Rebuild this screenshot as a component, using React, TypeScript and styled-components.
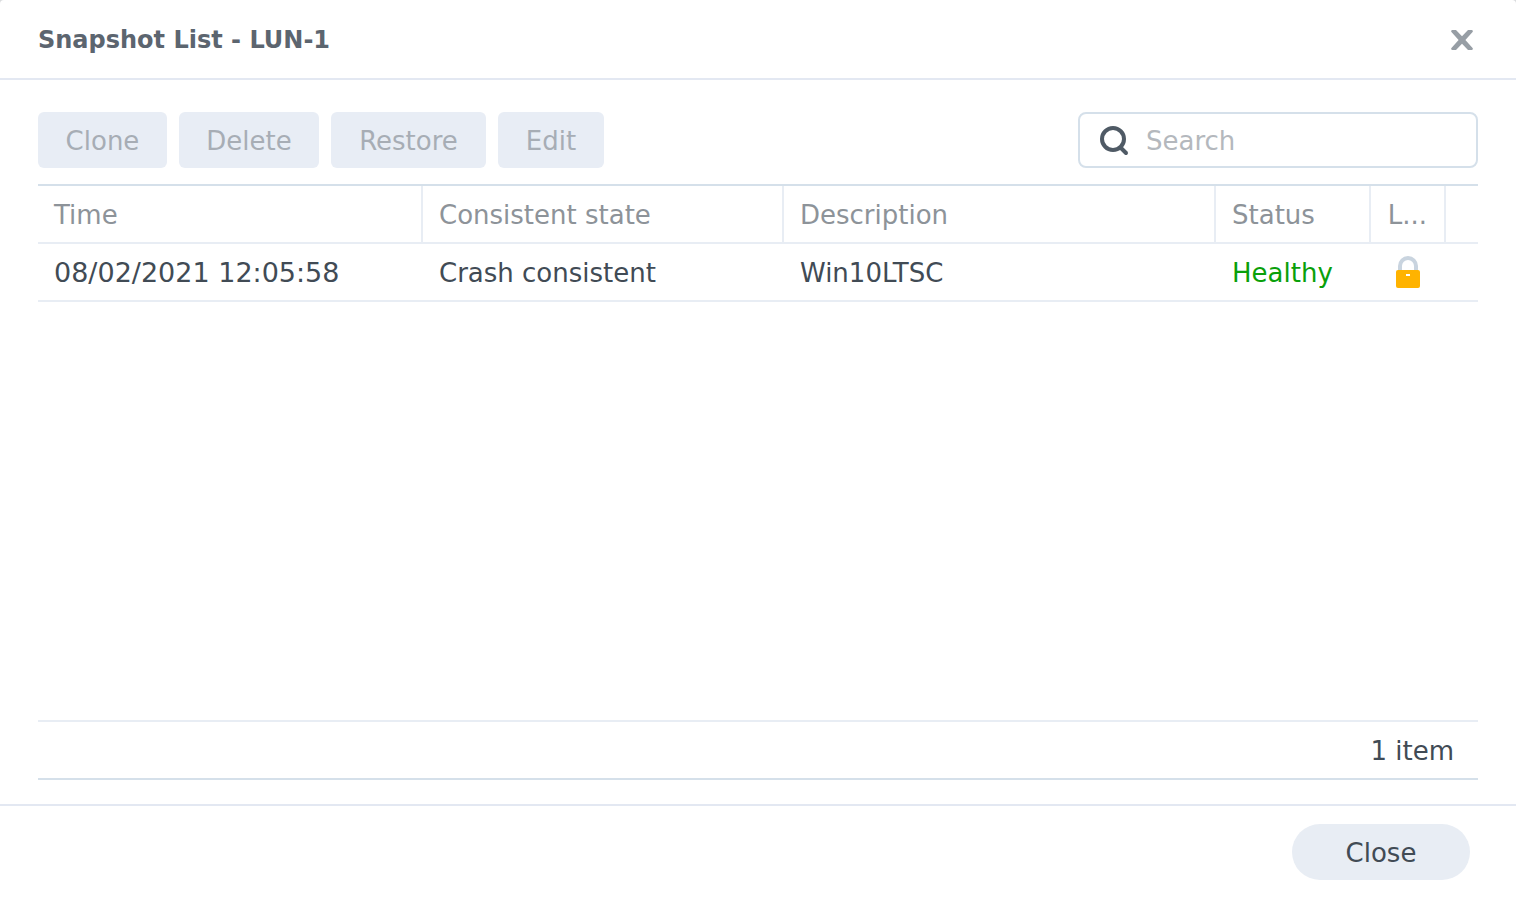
import React from "react";
import styled, { createGlobalStyle } from "styled-components";

const GlobalStyle = createGlobalStyle`
  * { box-sizing: border-box; }
  body {
    margin: 0;
    background: #d9dbdd;
    color: #414b55;
    font-family: Verdana, "DejaVu Sans", sans-serif;
    font-size: 26px;
    line-height: 32px;
  }
  button, input { font: inherit; color: inherit; }
`;

const Dialog = styled.main`
  display: flex;
  flex-direction: column;
  min-height: 100vh;
  background: #fff;
  border-radius: 4px 4px 0 0;
`;

const Header = styled.header`
  display: flex;
  align-items: center;
  justify-content: space-between;
  height: 80px;
  padding: 2px 38px 0;
  border-bottom: 2px solid #e3e8f2;
`;

const Title = styled.h1`
  margin: 0;
  font-size: 24px;
  font-weight: 700;
  color: #5c656f;
`;

const IconButton = styled.button`
  display: flex;
  align-items: center;
  justify-content: center;
  width: 32px;
  height: 32px;
  padding: 0;
  border: 0;
  background: none;
  color: #979ea5;
`;

const Content = styled.section`
  flex: 1;
  display: flex;
  flex-direction: column;
  padding: 32px 38px 24px;
`;

const Toolbar = styled.div`
  display: flex;
  align-items: center;
  gap: 12px;
  margin-bottom: 16px;
`;

const ActionButton = styled.button<{ $width: number }>`
  width: ${({ $width }) => $width}px;
  height: 56px;
  padding: 2px 0 0;
  border: 0;
  border-radius: 6px;
  background: #e8edf5;
  &:disabled { color: #a7adb5; }
`;

const SearchBox = styled.label`
  display: flex;
  align-items: center;
  gap: 16px;
  width: 400px;
  height: 56px;
  margin-left: auto;
  padding: 0 18px;
  border: 2px solid #d5e0ea;
  border-radius: 8px;
`;

const SearchInput = styled.input`
  flex: 1;
  min-width: 0;
  padding: 2px 0 0;
  border: 0;
  outline: 0;
  background: none;
  &::placeholder { color: #b4b8bd; opacity: 1; }
`;

const Grid = styled.div`
  flex: 1;
  display: flex;
  flex-direction: column;
  border-top: 2px solid #d5e0ea;
  border-bottom: 2px solid #d5e0ea;
`;

const Table = styled.table`
  width: 100%;
  table-layout: fixed;
  border-collapse: separate;
  border-spacing: 0;
`;

const Column = styled.col<{ $width?: number }>`
  width: ${({ $width }) => ($width ? `${$width}px` : "auto")};
`;

const HeadCell = styled.th<{ $center?: boolean }>`
  height: 58px;
  padding: 2px 16px 0;
  border-bottom: 2px solid #e8edf4;
  border-right: 2px solid #e8edf4;
  color: #8d9399;
  font-weight: 400;
  text-align: ${({ $center }) => ($center ? "center" : "left")};
  white-space: nowrap;
  overflow: hidden;
  text-overflow: ellipsis;
  &:last-child { border-right: 0; }
`;

const Cell = styled.td<{ $healthy?: boolean; $numeric?: boolean }>`
  height: 58px;
  padding: 2px 16px 0;
  border-bottom: 2px solid #e8edf4;
  color: ${({ $healthy }) => ($healthy ? "#0aa00a" : "inherit")};
  font-size: ${({ $numeric }) => ($numeric ? 27 : 26)}px;
  white-space: nowrap;
`;

const IconCell = styled(Cell)`
  padding: 0 18px 0 16px;
`;

const LockIcon = styled.svg`
  display: block;
  margin: 0 auto;
`;

const Summary = styled.div`
  margin-top: auto;
  padding: 13px 24px 11px;
  border-top: 2px solid #e8edf4;
  text-align: right;
`;

const Footer = styled.footer`
  display: flex;
  justify-content: flex-end;
  padding: 18px 46px;
  border-top: 2px solid #e3e8f2;
`;

const CloseButton = styled.button`
  width: 178px;
  height: 56px;
  padding: 2px 0 0;
  border: 0;
  border-radius: 28px;
  background: #e8edf4;
`;

const actions = [
  { label: "Clone", width: 129 },
  { label: "Delete", width: 140 },
  { label: "Restore", width: 155 },
  { label: "Edit", width: 106 },
];

const snapshots = [
  { time: "08/02/2021 12:05:58", state: "Crash consistent", description: "Win10LTSC", status: "Healthy" },
];

export default function App() {
  return (
    <>
      <GlobalStyle />
      <Dialog>
        <Header>
          <Title>Snapshot List - LUN-1</Title>
          <IconButton type="button" aria-label="Close window">
            <svg width="22" height="20" viewBox="0 0 22 20" fill="currentColor">
              <path d="M1 0h4L11 6.200 17 0H21l.8.8v1L14.400 10l7.400 8.200v1l-.8.8h-4L11 13.800 5 20H1l-.8-.8v-1L7.600 10 .2 1.800v-1z" />
            </svg>
          </IconButton>
        </Header>
        <Content>
          <Toolbar>
            {actions.map(({ label, width }) => (
              <ActionButton key={label} type="button" $width={width} disabled>{label}</ActionButton>
            ))}
            <SearchBox>
              <svg width="32" height="32" viewBox="0 0 32 32" fill="none" stroke="#4f5a65" strokeWidth="4">
                <circle cx="15" cy="15" r="11" />
                <path d="M22.500 23.500 28 29" strokeLinecap="round" />
              </svg>
              <SearchInput type="text" placeholder="Search" aria-label="Search" />
            </SearchBox>
          </Toolbar>
          <Grid>
            <Table>
              <colgroup>
                <Column $width={385} />
                <Column $width={361} />
                <Column />
                <Column $width={155} />
                <Column $width={75} />
                <Column $width={32} />
              </colgroup>
              <thead>
                <tr>
                  <HeadCell>Time</HeadCell>
                  <HeadCell>Consistent state</HeadCell>
                  <HeadCell>Description</HeadCell>
                  <HeadCell>Status</HeadCell>
                  <HeadCell $center>L...</HeadCell>
                  <HeadCell />
                </tr>
              </thead>
              <tbody>
                {snapshots.map((snapshot) => (
                  <tr key={snapshot.time}>
                    <Cell $numeric>{snapshot.time}</Cell>
                    <Cell>{snapshot.state}</Cell>
                    <Cell>{snapshot.description}</Cell>
                    <Cell $healthy>{snapshot.status}</Cell>
                    <IconCell>
                      <LockIcon width="24" height="32" viewBox="0 0 24 32" role="img" aria-label="Locked">
                        <path d="M4 16V10a8 8 0 0 1 16 0v6" fill="none" stroke="#c9d4df" strokeWidth="4" />
                        <rect y="14" width="24" height="18" rx="2" fill="#ffb300" />
                        <rect x="10" y="18" width="4" height="2" fill="#fff" />
                      </LockIcon>
                    </IconCell>
                    <Cell />
                  </tr>
                ))}
              </tbody>
            </Table>
            <Summary>1 item</Summary>
          </Grid>
        </Content>
        <Footer>
          <CloseButton type="button">Close</CloseButton>
        </Footer>
      </Dialog>
    </>
  );
}
